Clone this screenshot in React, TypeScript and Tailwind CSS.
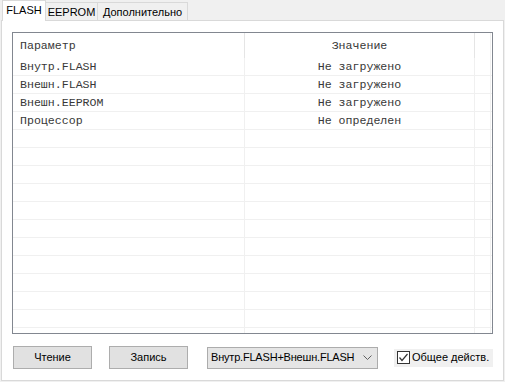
import React from "react";

const rows: [string, string][] = [
  ["Внутр.FLASH", "Не загружено"],
  ["Внешн.FLASH", "Не загружено"],
  ["Внешн.EEPROM", "Не загружено"],
  ["Процессор", "Не определен"],
];

const TOTAL_ROWS = 15;

function Row({ a, b }: { a: string; b: string }) {
  return (
    <div className="flex h-[18px] border-b border-[#f0f0f0]">
      <div className="w-[232px] border-r border-[#f0f0f0] pl-[7px] flex items-center leading-none whitespace-pre">{a}</div>
      <div className="w-[230px] border-r border-[#f0f0f0] flex items-center justify-center leading-none whitespace-pre">{b}</div>
      <div className="w-[16px] border-r border-[#f0f0f0]" />
    </div>
  );
}

export default function App() {
  const all: [string, string][] = [];
  for (let i = 0; i < TOTAL_ROWS; i++) all.push(rows[i] ?? ["", ""]);
  return (
    <div className="w-[505px] h-[382px] bg-[#f0f0f0] flex flex-col text-[11px] text-black font-['Liberation_Sans','Arial',sans-serif] whitespace-nowrap">
      {/* tab strip */}
      <div className="h-[20px] flex items-start pl-[2px]">
        <div className="relative z-10 h-[21px] w-[44px] bg-white border border-b-0 border-[#d9d9d9] flex items-center justify-center pb-[1px]">
          FLASH
        </div>
        <div className="mt-[2px] h-[18px] w-[52px] bg-[#f0f0f0] border border-b-0 border-l-0 border-[#d9d9d9] flex items-center justify-center pt-[1px]">
          EEPROM
        </div>
        <div className="mt-[2px] h-[18px] w-[90px] bg-[#f0f0f0] border border-b-0 border-l-0 border-[#d9d9d9] flex items-center justify-center pt-[1px]">
          Дополнительно
        </div>
      </div>

      {/* panel */}
      <div className="ml-[1px] w-[503px] h-[361px] bg-white border border-[#d9d9d9] pl-[10px] pt-[11px] flex flex-col">
        <div className="w-[481px] h-[302px] border border-[#828790] bg-white flex flex-col font-['Liberation_Mono','Courier_New',monospace] text-[11.6px] text-[#383838]">
          <div className="flex h-[25px]">
            <div className="w-[232px] border-r border-[#e5e5e5] pl-[7px] flex items-center">Параметр</div>
            <div className="w-[230px] border-r border-[#e5e5e5] flex items-center justify-center">Значение</div>
            <div className="w-[16px] border-r border-[#f0f0f0]" />
          </div>
          {all.map((r, i) => (
            <Row key={i} a={r[0]} b={r[1]} />
          ))}
          <div className="flex flex-1">
            <div className="w-[232px] border-r border-[#f0f0f0]" />
            <div className="w-[230px] border-r border-[#f0f0f0]" />
            <div className="w-[16px] border-r border-[#f0f0f0]" />
          </div>
        </div>

        <div className="mt-[12px] ml-[1px] flex items-center h-[23px]">
          <button className="w-[79px] h-[23px] bg-[#e1e1e1] border border-[#adadad] flex items-center justify-center">
            Чтение
          </button>
          <button className="ml-[17px] w-[79px] h-[23px] bg-[#e1e1e1] border border-[#adadad] flex items-center justify-center">
            Запись
          </button>
          <div className="ml-[19px] w-[171px] h-[22px] bg-[#e5e5e5] border border-[#acacac] flex items-center pl-[3px] pr-[5px]">
            <span className="flex-1 tracking-[-0.2px]">Внутр.FLASH+Внешн.FLASH</span>
            <svg width="9" height="5" viewBox="0 0 9 5" className="mb-[1px]">
              <path d="M0.5 0.5 L4.5 4.5 L8.5 0.5" fill="none" stroke="#606060" strokeWidth="1" />
            </svg>
          </div>
          <div className="ml-[16px] w-[99px] h-[18px] bg-[#f0f0f0] flex items-center pl-[3px]">
            <div className="w-[13px] h-[13px] border border-[#333] bg-white flex items-center justify-center">
              <svg width="11" height="11" viewBox="0 0 11 11">
                <path d="M1.5 5.5 L4 8.5 L9.5 2" fill="none" stroke="#333" strokeWidth="1.2" />
              </svg>
            </div>
            <span className="ml-[2px]">Общее действ.</span>
          </div>
        </div>
      </div>
    </div>
  );
}
